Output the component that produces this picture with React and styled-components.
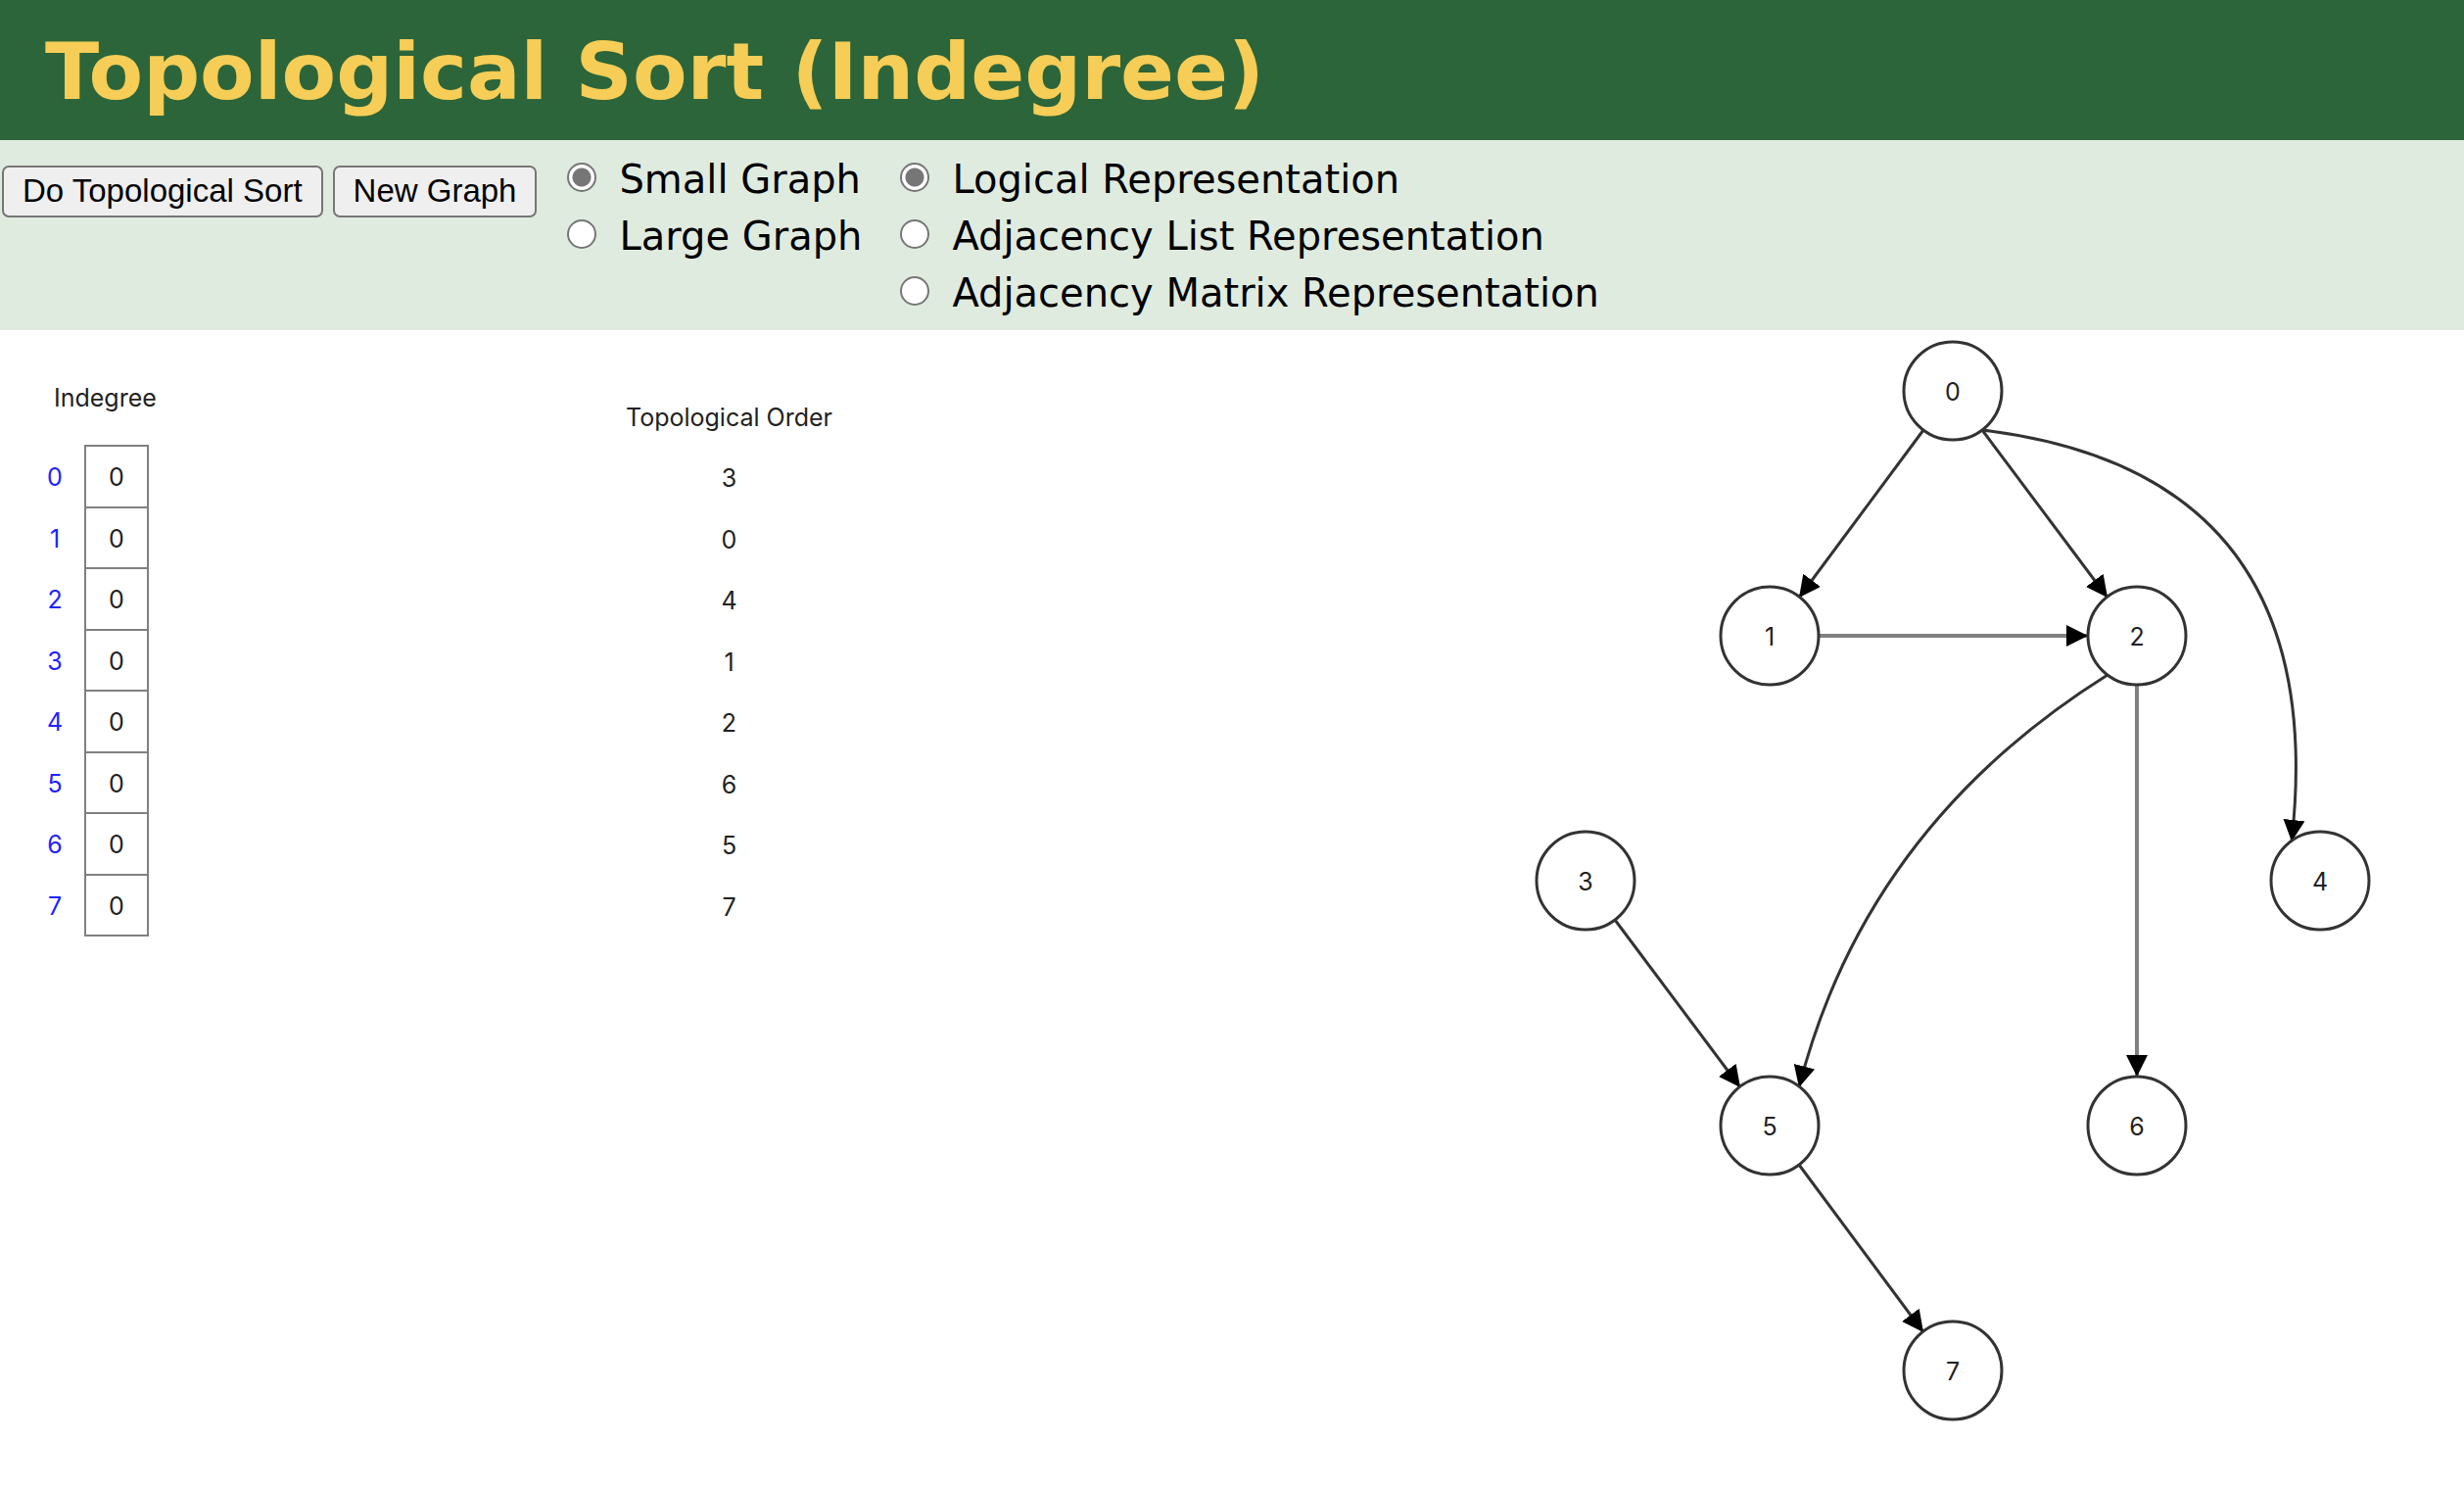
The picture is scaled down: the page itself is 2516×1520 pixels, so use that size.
import React from "react";
import styled, { createGlobalStyle } from "styled-components";

const Global = createGlobalStyle`
  * { box-sizing: border-box; }
  body { margin: 0; background: #fff; color: #000; font-family: "DejaVu Sans", Verdana, sans-serif; }
`;

const Header = styled.header`
  background: #2c6539;
  padding: 26px 46px 23px;
`;

const Title = styled.h1`
  margin: 0;
  color: #f6cd56;
  font-size: 81px;
  line-height: 94px;
  font-weight: bold;
  white-space: nowrap;
`;

const Toolbar = styled.div`
  display: flex;
  align-items: flex-start;
  background: #e0ebdf;
  padding: 10px 2px;
`;

const Buttons = styled.div`
  display: flex;
  gap: 10px;
  padding-top: 16px;
`;

const Button = styled.button`
  height: 53px;
  padding: 0 19px 2px;
  border: 2px solid #767676;
  border-radius: 7px;
  background: #efefef;
  color: #000;
  font: 33px/44px "Liberation Sans", Arial, sans-serif;
  white-space: nowrap;
`;

const Choices = styled.fieldset`
  display: flex;
  flex-direction: column;
  border: 0;
  margin: 0;
  padding: 0 0 0 ${(p) => p.$gap}px;
`;

const Choice = styled.label`
  display: flex;
  align-items: flex-start;
  gap: 23px;
  height: 58px;
  font-size: 40px;
  line-height: 50px;
  padding-top: 5px;
  white-space: nowrap;
`;

const Radio = styled.input`
  appearance: none;
  flex: none;
  width: 30px;
  height: 30px;
  margin: 8px 0 0;
  border: 2px solid #767676;
  border-radius: 50%;
  background: #fff;
  &:checked { background: radial-gradient(circle, #767676 9px, #fff 10px); }
`;

const Canvas = styled.main`
  display: flex;
  align-items: flex-start;
  justify-content: space-between;
  font-family: Inter, "Liberation Sans", sans-serif;
  font-size: 25px;
  line-height: 30px;
  color: #222;
`;

const Lists = styled.div`
  display: flex;
  gap: 487px;
  padding: 54px 0 0 30px;
`;

const ListTitle = styled.h2`
  margin: 0;
  font-size: 25px;
  font-weight: normal;
  white-space: nowrap;
`;

const IndegreeColumn = styled.section`
  display: flex;
  flex-direction: column;
  gap: 33px;
  width: 122px;
  ${ListTitle} { padding-left: 25px; }
`;

const IndegreeTable = styled.table`
  width: 100%;
  table-layout: fixed;
  border-collapse: collapse;
  text-align: center;
  tbody { height: 500px; }
  th, td { padding: 2px 0 0; height: 62px; }
  th { width: 57px; padding-right: 4px; color: #22f; font-weight: normal; }
  td { border: 2px solid #808080; }
`;

const OrderColumn = styled.section`
  text-align: center;
  padding-top: 20px;
`;

const OrderList = styled.ol`
  list-style: none;
  margin: 16px 0 0;
  padding: 0;
  display: grid;
  grid-template-rows: repeat(8, 1fr);
  height: 500px;
  align-items: center;
`;

const Graph = styled.svg`
  flex: none;
  width: 956px;
  height: 1183px;
  text { text-anchor: middle; fill: #222; }
`;

const nodes = [
  [434, 62], [247, 312], [622, 312], [59, 562],
  [809, 562], [247, 812], [622, 812], [434, 1062],
];

const edges = [
  { d: "M404 102L277 273" },
  { d: "M464 102L592 273" },
  { d: "M464 102Q822 145 780 522" },
  { d: "M297 312H572", straight: true },
  { d: "M622 362V762", straight: true },
  { d: "M592 352Q345 507 277 773" },
  { d: "M89 602L217 773" },
  { d: "M277 852L404 1023" },
];

function RadioGroup({ name, label, gap, options }) {
  return (
    <Choices $gap={gap} aria-label={label}>
      {options.map((o, i) => (
        <Choice key={o}>
          <Radio type="radio" name={name} defaultChecked={i === 0} />
          {o}
        </Choice>
      ))}
    </Choices>
  );
}

export default function App() {
  return (
    <>
      <Global />
      <Header><Title>Topological Sort (Indegree)</Title></Header>
      <Toolbar>
        <Buttons>
          <Button type="button">Do Topological Sort</Button>
          <Button type="button">New Graph</Button>
        </Buttons>
        <RadioGroup name="size" label="Graph size" gap={31} options={["Small Graph", "Large Graph"]} />
        <RadioGroup
          name="representation"
          label="Representation"
          gap={39}
          options={["Logical Representation", "Adjacency List Representation", "Adjacency Matrix Representation"]}
        />
      </Toolbar>
      <Canvas>
        <Lists>
          <IndegreeColumn>
            <ListTitle id="indegree">Indegree</ListTitle>
            <IndegreeTable aria-labelledby="indegree">
              <tbody>
                {nodes.map((_, i) => <tr key={i}><th scope="row">{i}</th><td>0</td></tr>)}
              </tbody>
            </IndegreeTable>
          </IndegreeColumn>
          <OrderColumn>
            <ListTitle>Topological Order</ListTitle>
            <OrderList>{[3, 0, 4, 1, 2, 6, 5, 7].map((n) => <li key={n}>{n}</li>)}</OrderList>
          </OrderColumn>
        </Lists>
        <Graph viewBox="0 0 956 1183" role="img" aria-label="Directed graph">
          <defs>
            <marker id="arrow" markerUnits="userSpaceOnUse" markerWidth="24" markerHeight="24" refX="22" refY="11" orient="auto">
              <path d="M0 0L22 11L0 22Z" />
            </marker>
          </defs>
          {edges.map((e) => (
            <path key={e.d} d={e.d} fill="none" stroke={e.straight ? "#808080" : "#333"} strokeWidth={e.straight ? 4 : 3} markerEnd="url(#arrow)" />
          ))}
          {nodes.map(([x, y], i) => (
            <g key={i}>
              <circle cx={x} cy={y} r="50" fill="#fff" stroke="#333" strokeWidth="3" />
              <text x={x} y={y + 10}>{i}</text>
            </g>
          ))}
        </Graph>
      </Canvas>
    </>
  );
}
